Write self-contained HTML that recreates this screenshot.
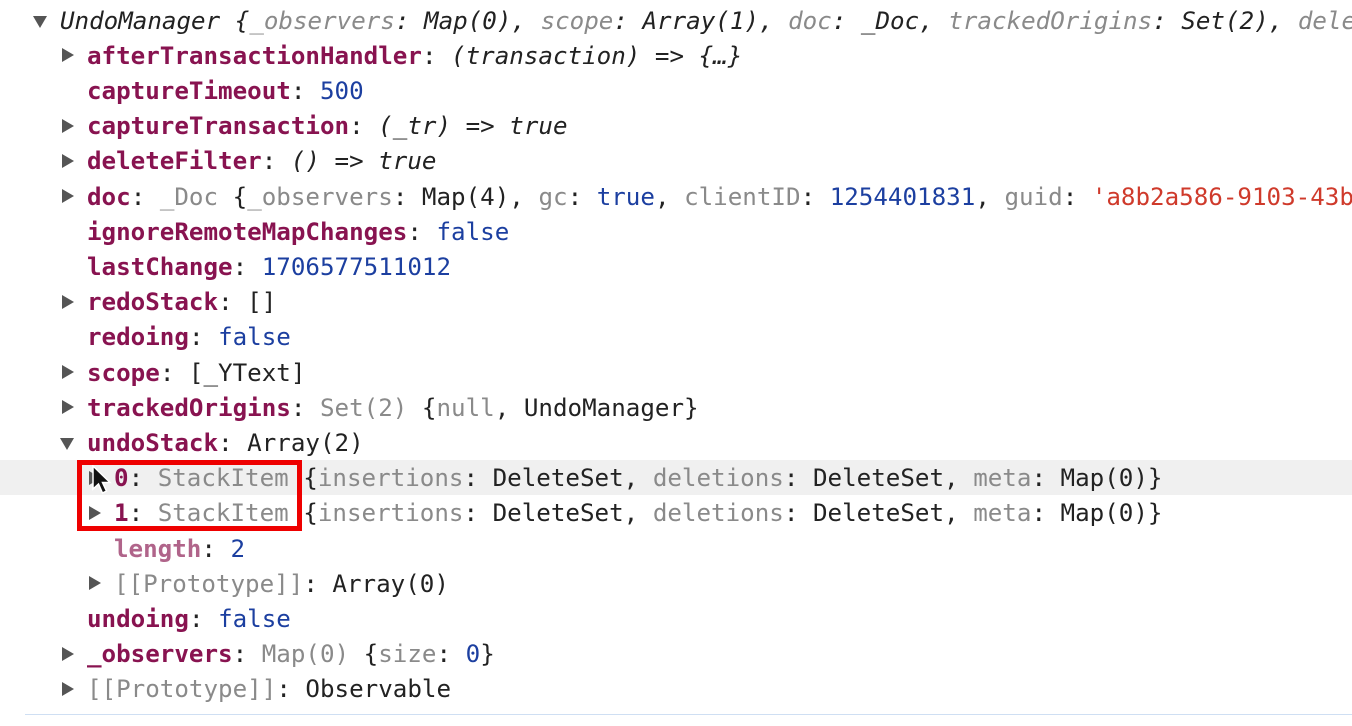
<!DOCTYPE html>
<html><head><meta charset="utf-8"><style>
html,body{margin:0;padding:0;background:#fff;width:1352px;height:726px;overflow:hidden}
body{font-family:"DejaVu Sans Mono","Liberation Mono",monospace;font-size:24.2px;color:#222;position:relative}
.l{position:absolute;left:0;right:0;height:35.2px;line-height:35.2px;white-space:pre}
.x{position:absolute;top:1.5px}
.k{color:#881350;font-weight:bold}
.kf{color:#b0648a;font-weight:bold}
.n{color:#1c3fa0}
.s{color:#cf3a2b}
.g{color:#8a8a8a}
.i{font-style:italic}
.t{position:absolute;top:11px;width:0;height:0;border-top:7.5px solid transparent;border-bottom:7.5px solid transparent;border-left:12px solid #555}
.d{position:absolute;top:14px;width:0;height:0;border-left:7.5px solid transparent;border-right:7.5px solid transparent;border-top:12px solid #555}
</style></head><body>
<div class="l" style="top:2px"><span class="d" style="left:33px"></span><span class="x i" style="left:60px">UndoManager {<span class="g">_observers</span>: Map(0), <span class="g">scope</span>: Array(1), <span class="g">doc</span>: _Doc, <span class="g">trackedOrigins</span>: Set(2), <span class="g">dele</span></span></div>
<div class="l" style="top:37.2px"><span class="t" style="left:62px"></span><span class="x" style="left:87px"><span class="k">afterTransactionHandler</span>: <span class="i">(transaction) =&gt; {…}</span></span></div>
<div class="l" style="top:72.4px"><span class="x" style="left:87px"><span class="k">captureTimeout</span>: <span class="n">500</span></span></div>
<div class="l" style="top:107.6px"><span class="t" style="left:62px"></span><span class="x" style="left:87px"><span class="k">captureTransaction</span>: <span class="i">(_tr) =&gt; true</span></span></div>
<div class="l" style="top:142.8px"><span class="t" style="left:62px"></span><span class="x" style="left:87px"><span class="k">deleteFilter</span>: <span class="i">() =&gt; true</span></span></div>
<div class="l" style="top:178px"><span class="t" style="left:62px"></span><span class="x" style="left:87px"><span class="k">doc</span>: <span class="g">_Doc</span> {<span class="g">_observers</span>: Map(4), <span class="g">gc</span>: <span class="n">true</span>, <span class="g">clientID</span>: <span class="n">1254401831</span>, <span class="g">guid</span>: <span class="s">'a8b2a586-9103-43b</span></span></div>
<div class="l" style="top:213.2px"><span class="x" style="left:87px"><span class="k">ignoreRemoteMapChanges</span>: <span class="n">false</span></span></div>
<div class="l" style="top:248.4px"><span class="x" style="left:87px"><span class="k">lastChange</span>: <span class="n">1706577511012</span></span></div>
<div class="l" style="top:283.6px"><span class="t" style="left:62px"></span><span class="x" style="left:87px"><span class="k">redoStack</span>: []</span></div>
<div class="l" style="top:318.8px"><span class="x" style="left:87px"><span class="k">redoing</span>: <span class="n">false</span></span></div>
<div class="l" style="top:354px"><span class="t" style="left:62px"></span><span class="x" style="left:87px"><span class="k">scope</span>: [_YText]</span></div>
<div class="l" style="top:389.2px"><span class="t" style="left:62px"></span><span class="x" style="left:87px"><span class="k">trackedOrigins</span>: <span class="g">Set(2)</span> {<span class="g">null</span>, UndoManager}</span></div>
<div class="l" style="top:424.4px"><span class="d" style="left:60px"></span><span class="x" style="left:87px"><span class="k">undoStack</span>: Array(2)</span></div>
<div class="l" style="top:459.6px;background:#f0f0f0"><span class="t" style="left:89px"></span><span class="x" style="left:114px"><span class="k">0</span>: <span class="g">StackItem</span> {<span class="g">insertions</span>: DeleteSet, <span class="g">deletions</span>: DeleteSet, <span class="g">meta</span>: Map(0)}</span></div>
<div class="l" style="top:494.8px"><span class="t" style="left:89px"></span><span class="x" style="left:114px"><span class="k">1</span>: <span class="g">StackItem</span> {<span class="g">insertions</span>: DeleteSet, <span class="g">deletions</span>: DeleteSet, <span class="g">meta</span>: Map(0)}</span></div>
<div class="l" style="top:530px"><span class="x" style="left:114px"><span class="kf">length</span>: <span class="n">2</span></span></div>
<div class="l" style="top:565.2px"><span class="t" style="left:89px"></span><span class="x" style="left:114px"><span class="g">[[Prototype]]</span>: Array(0)</span></div>
<div class="l" style="top:600.4px"><span class="x" style="left:87px"><span class="k">undoing</span>: <span class="n">false</span></span></div>
<div class="l" style="top:635.6px"><span class="t" style="left:62px"></span><span class="x" style="left:87px"><span class="k">_observers</span>: <span class="g">Map(0)</span> {<span class="g">size</span>: <span class="n">0</span>}</span></div>
<div class="l" style="top:670.8px"><span class="t" style="left:62px"></span><span class="x" style="left:87px"><span class="g">[[Prototype]]</span>: Observable</span></div>
<div style="position:absolute;left:25px;right:0;top:714px;height:1px;background:#cfdff3"></div>
<div style="position:absolute;left:77px;top:460px;width:215px;height:61px;border:5px solid #ee0000"></div>
<svg style="position:absolute;left:92px;top:465px" width="24" height="32" viewBox="0 0 24 32"><path d="M1 1 L1 24 L6.5 19 L10.5 28 L14.5 26 L10.5 17.5 L18 17.5 Z" fill="#111" stroke="#fff" stroke-width="1.5"/></svg>
</body></html>
